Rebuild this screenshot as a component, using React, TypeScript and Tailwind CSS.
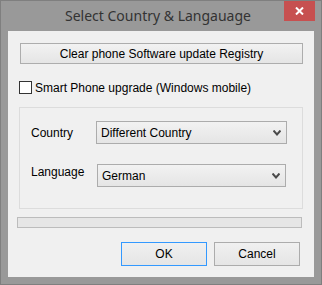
import React from "react";

function Chevron() {
  return (
    <svg width="8" height="6" viewBox="0 0 8 6" className="shrink-0">
      <path d="M0.5 0.5 L4 4.5 L7.5 0.5" fill="none" stroke="#4a4a4a" strokeWidth="2" />
    </svg>
  );
}

function Select({ value, className }: { value: string; className: string }) {
  return (
    <div
      className={`flex items-center justify-between border border-[#acacac] bg-gradient-to-b from-[#f2f2f2] to-[#e5e5e5] pl-[4px] pr-[5px] ${className}`}
    >
      <span className="text-[12px] text-black leading-none">{value}</span>
      <Chevron />
    </div>
  );
}

export default function App() {
  const font = { fontFamily: '"Liberation Sans", Arial, sans-serif' };
  return (
    <div
      className="w-[322px] h-[285px] bg-[#999999] border border-[#7f7f7f] flex flex-col"
      style={font}
    >
      <div className="h-[30px] flex items-start">
        <div className="w-[30px]" />
        <div
          className="flex-1 h-[29px] flex items-center justify-center text-[14px] text-[#333333] pl-[1px]"
          style={{ fontFamily: '"Noto Sans", "Open Sans", sans-serif' }}
        >
          Select Country &amp; Langauage
        </div>
        <div className="w-[31px] h-[20px] bg-[#c75050] flex items-center justify-center mr-[6px]">
          <svg width="9" height="8" viewBox="0 0 9 8">
            <path d="M1 0.5 L8 7.5 M8 0.5 L1 7.5" stroke="#ffffff" strokeWidth="2" />
          </svg>
        </div>
      </div>
      <div className="ml-[7px] w-[306px] h-[246px] bg-[#f0f0f0] flex flex-col">
        <div className="ml-[12px] mt-[12px] w-[283px] h-[21px] border border-[#adadad] bg-gradient-to-b from-[#f2f2f2] to-[#e5e5e5] flex items-center justify-center text-[12px] text-black">
          Clear phone Software update Registry
        </div>
        <div className="ml-[11px] mt-[17px] flex items-center h-[13px]">
          <div className="w-[13px] h-[13px] border border-[#333333] bg-white" />
          <span className="ml-[3px] text-[12px] text-black">Smart Phone upgrade (Windows mobile)</span>
        </div>
        <div className="ml-[11px] mt-[13px] w-[284px] h-[102px] border border-[#dcdcdc] flex flex-col">
          <div className="mt-[13px] flex items-center h-[23px]">
            <span className="ml-[11px] w-[65px] text-[12px] text-black">Country</span>
            <Select value="Different Country" className="w-[191px] h-[23px]" />
          </div>
          <div className="mt-[20px] flex items-start h-[23px]">
            <span className="ml-[11px] w-[66px] text-[12px] text-black leading-[16px]">Language</span>
            <Select value="German" className="w-[189px] h-[23px]" />
          </div>
        </div>
        <div className="ml-[9px] mt-[8px] w-[285px] h-[11px] border border-[#bcbcbc] bg-[#e6e6e6]" />
        <div className="ml-[113px] mt-[14px] flex gap-[7px]">
          <div className="w-[86px] h-[24px] border border-[#3399ff] bg-gradient-to-b from-[#f0f0f0] to-[#e5e5e5] flex items-center justify-center text-[12px] text-black">
            OK
          </div>
          <div className="w-[86px] h-[24px] border border-[#acacac] bg-gradient-to-b from-[#f0f0f0] to-[#e5e5e5] flex items-center justify-center text-[12px] text-black">
            Cancel
          </div>
        </div>
      </div>
    </div>
  );
}
